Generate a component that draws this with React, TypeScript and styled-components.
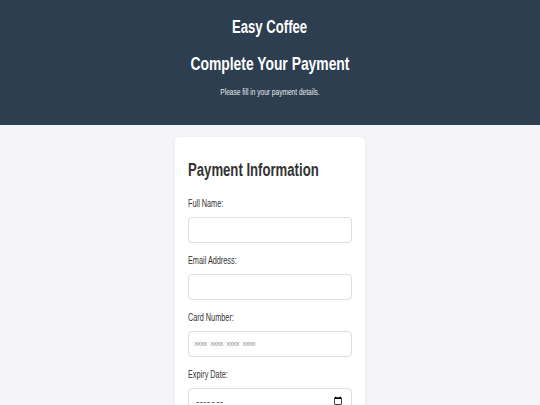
import React from "react";
import styled, { createGlobalStyle } from "styled-components";

const GlobalStyle = createGlobalStyle`
    body {
        margin: 0;
        background: #f4f4f9;
        font-family: "Liberation Sans", Arial, sans-serif;
        color: #333;
    }
`;

const FIELDS = [
    { id: "name", label: "Full Name:", type: "text", placeholder: "" },
    { id: "email", label: "Email Address:", type: "email", placeholder: "" },
    { id: "card", label: "Card Number:", type: "text", placeholder: "XXXX XXXX XXXX XXXX" },
    { id: "expiry", label: "Expiry Date:", type: "month", placeholder: "" },
];

// the screenshot's type is narrow, so the text runs are squeezed horizontally
const App = () => {
    return (
        <>
            <GlobalStyle />
            <Header>
                <Brand>
                    <Narrow>Easy Coffee</Narrow>
                </Brand>
                <Title>
                    <Narrow>Complete Your Payment</Narrow>
                </Title>
                <Subtitle>
                    <Narrow>Please fill in your payment details.</Narrow>
                </Subtitle>
            </Header>
            <Main>
                <Card>
                    <CardTitle>
                        <Narrow $left>Payment Information</Narrow>
                    </CardTitle>
                    {FIELDS.map((field) => (
                        <Field key={field.id}>
                            <Label htmlFor={field.id}>
                                <Narrow $left>{field.label}</Narrow>
                            </Label>
                            <Input id={field.id} type={field.type} placeholder={field.placeholder} />
                        </Field>
                    ))}
                </Card>
            </Main>
        </>
    );
};
export default App;

const Narrow = styled.span<{ $left?: boolean }>`
    display: inline-block;
    white-space: nowrap;
    transform: scaleX(0.73);
    transform-origin: ${(p) => (p.$left ? "left center" : "center center")};
`;

const Header = styled.header`
    background: #2c3e50;
    color: #fff;
    height: 125px;
    box-sizing: border-box;
    padding-top: 16px;
    text-align: center;
`;

const Brand = styled.h1`
    margin: 0;
    font-size: 18px;
    line-height: 22px;
    font-weight: bold;
`;

const Title = styled.h2`
    margin: 14px 0 0;
    font-size: 19px;
    line-height: 24px;
    font-weight: bold;
`;

const Subtitle = styled.p`
    margin: 11px 0 0;
    font-size: 9px;
    line-height: 11px;
    color: #e8ebef;
`;

const Main = styled.main`
    display: flex;
    justify-content: center;
    padding-top: 12px;
`;

const Card = styled.section`
    width: 190px;
    box-sizing: border-box;
    background: #fff;
    border-radius: 5px;
    padding: 22px 13px 20px;
    box-shadow: 0 1px 4px rgba(0, 0, 0, 0.05);
`;

const CardTitle = styled.h3`
    margin: 0 0 17px;
    font-size: 18px;
    line-height: 22px;
    font-weight: bold;
    color: #333;
`;

const Field = styled.div`
    display: flex;
    flex-direction: column;
    gap: 7px;
    margin-bottom: 12px;
`;

const Label = styled.label`
    font-size: 10px;
    line-height: 12px;
    color: #333;
`;

const Input = styled.input`
    height: 26px;
    box-sizing: border-box;
    border: 1px solid #ddd;
    border-radius: 4px;
    padding: 0 5px;
    font-family: inherit;
    font-size: 6px;
    letter-spacing: -0.9px;
    word-spacing: 3px;
    color: #555;
    background: #fff;
    &::placeholder {
        color: #8a8a8a;
    }
    &[type="month"] {
        font-size: 10px;
        letter-spacing: 0.3px;
        word-spacing: 2px;
        padding: 0 6px;
    }
`;
